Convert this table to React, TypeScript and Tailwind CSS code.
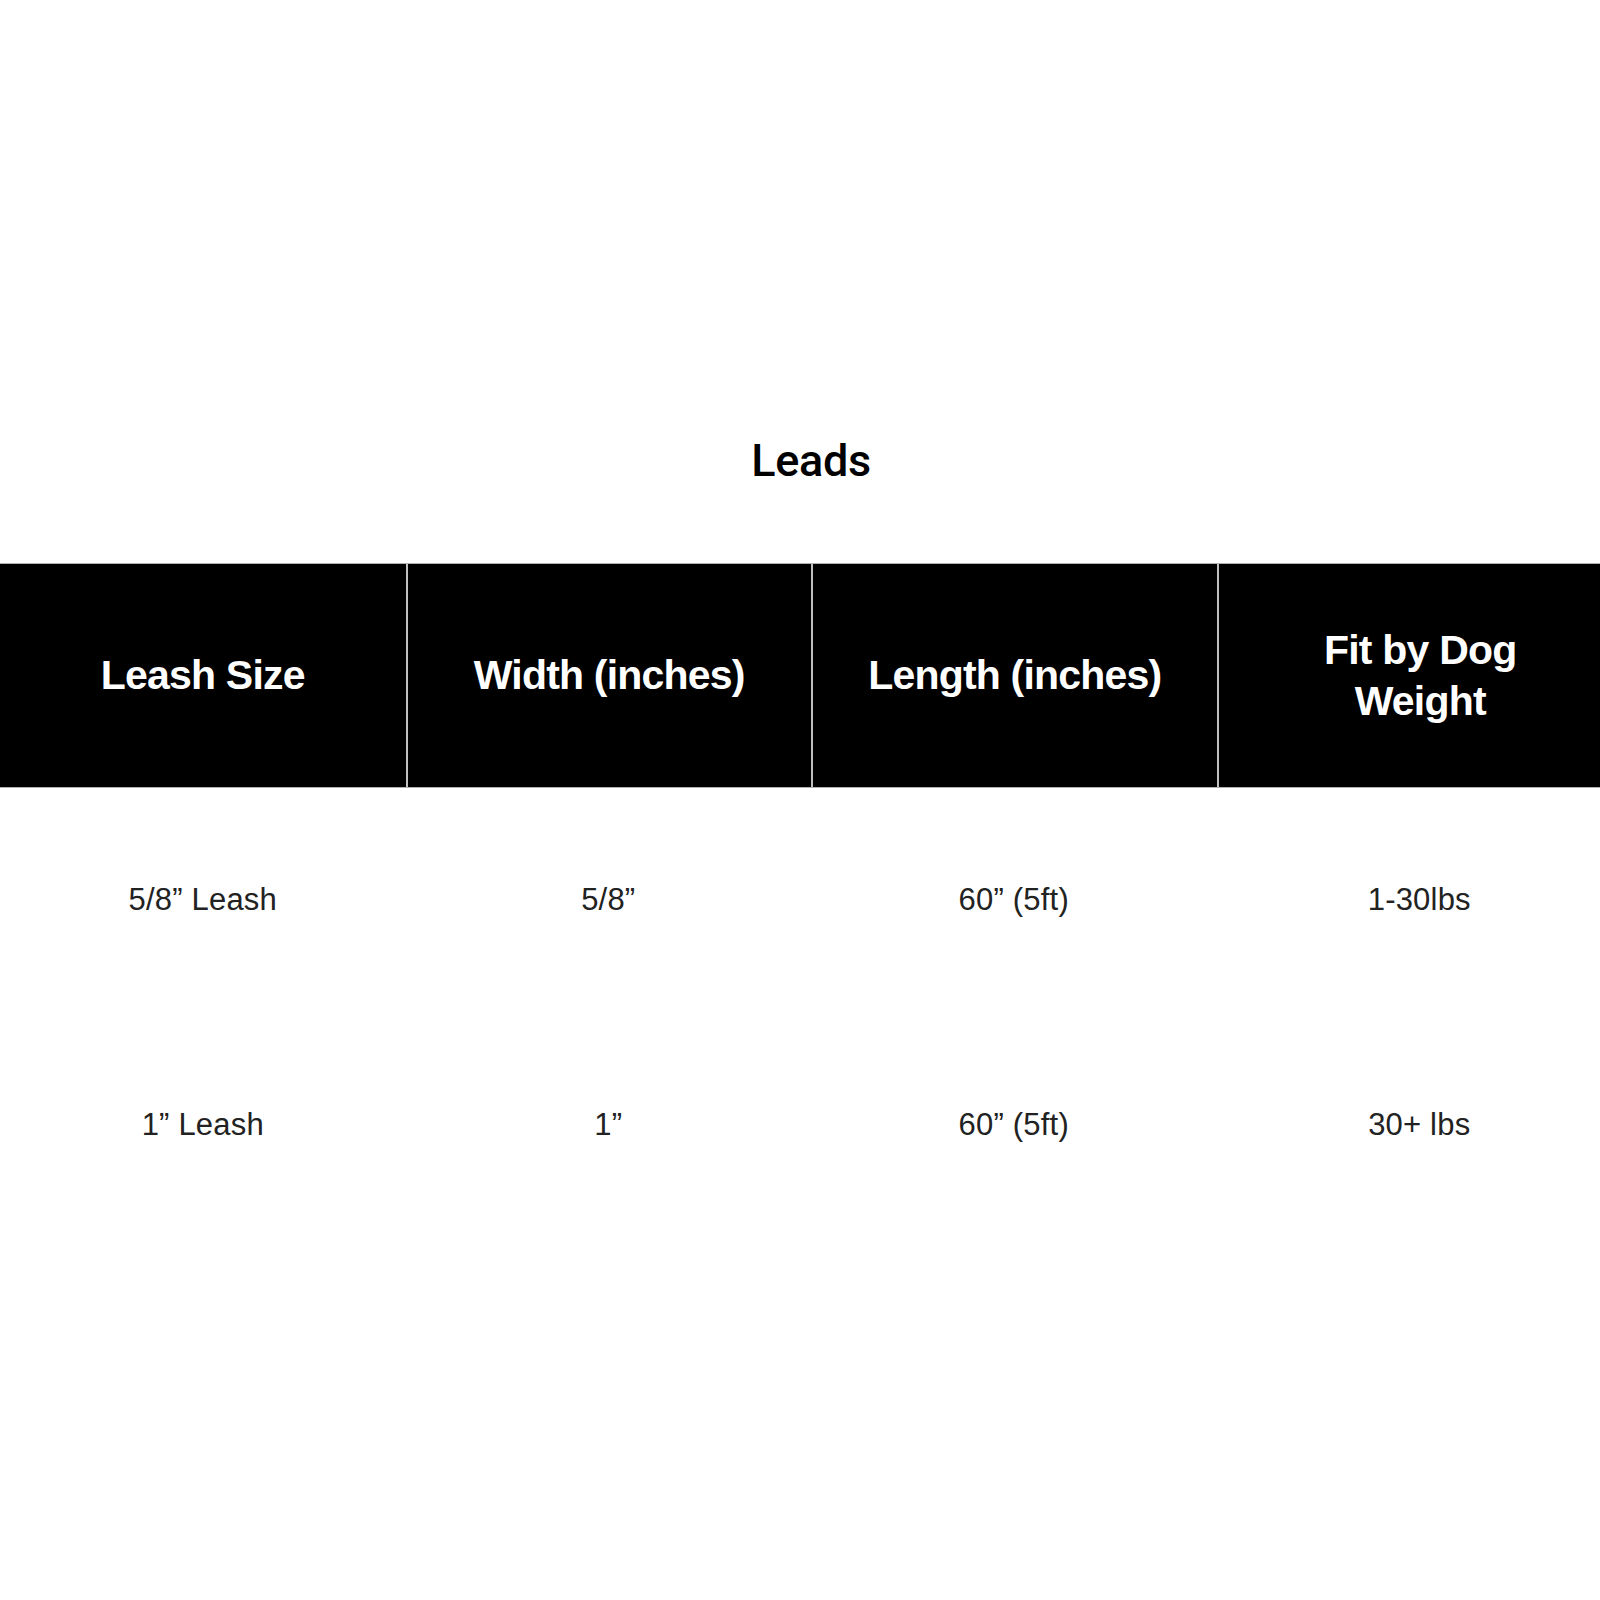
import React from "react";

const headers: React.ReactNode[] = [
  "Leash Size",
  "Width (inches)",
  "Length (inches)",
  <>
    Fit by Dog
    <br />
    Weight
  </>,
];
const rows = [
  ["5/8\u201D Leash", "5/8\u201D", "60\u201D (5ft)", "1-30lbs"],
  ["1\u201D Leash", "1\u201D", "60\u201D (5ft)", "30+ lbs"],
];

export default function App() {
  return (
    <div className="w-full min-h-[1600px] bg-white overflow-hidden" style={{ fontFamily: '"Liberation Sans", Arial, sans-serif' }}>
      <div className="w-[1622px] pt-[434px]">
        <h1
          className="text-center text-[45px] leading-[54px] font-medium text-black tracking-[-0.3px]"
          style={{ fontFamily: 'Roboto, "Liberation Sans", sans-serif' }}
        >
          Leads
        </h1>
        <div className="mt-[75px] grid grid-cols-4 bg-black border-y border-[#b0b0b0]">
          {headers.map((h, i) => (
            <div
              key={i}
              className={`h-[223px] flex items-center justify-center text-center px-10 text-white font-bold text-[41px] leading-[51px] tracking-[-0.8px] ${i > 0 ? "border-l-2 border-[#c0c0c0]" : ""}`}
            >
              <span>{h}</span>
            </div>
          ))}
        </div>
        {rows.map((r, ri) => (
          <div key={ri} className="grid grid-cols-4">
            {r.map((c, ci) => (
              <div key={ci} className="h-[225px] flex items-center justify-center text-center text-[31px] text-[#222] tracking-[0.2px]">
                {c}
              </div>
            ))}
          </div>
        ))}
      </div>
    </div>
  );
}
